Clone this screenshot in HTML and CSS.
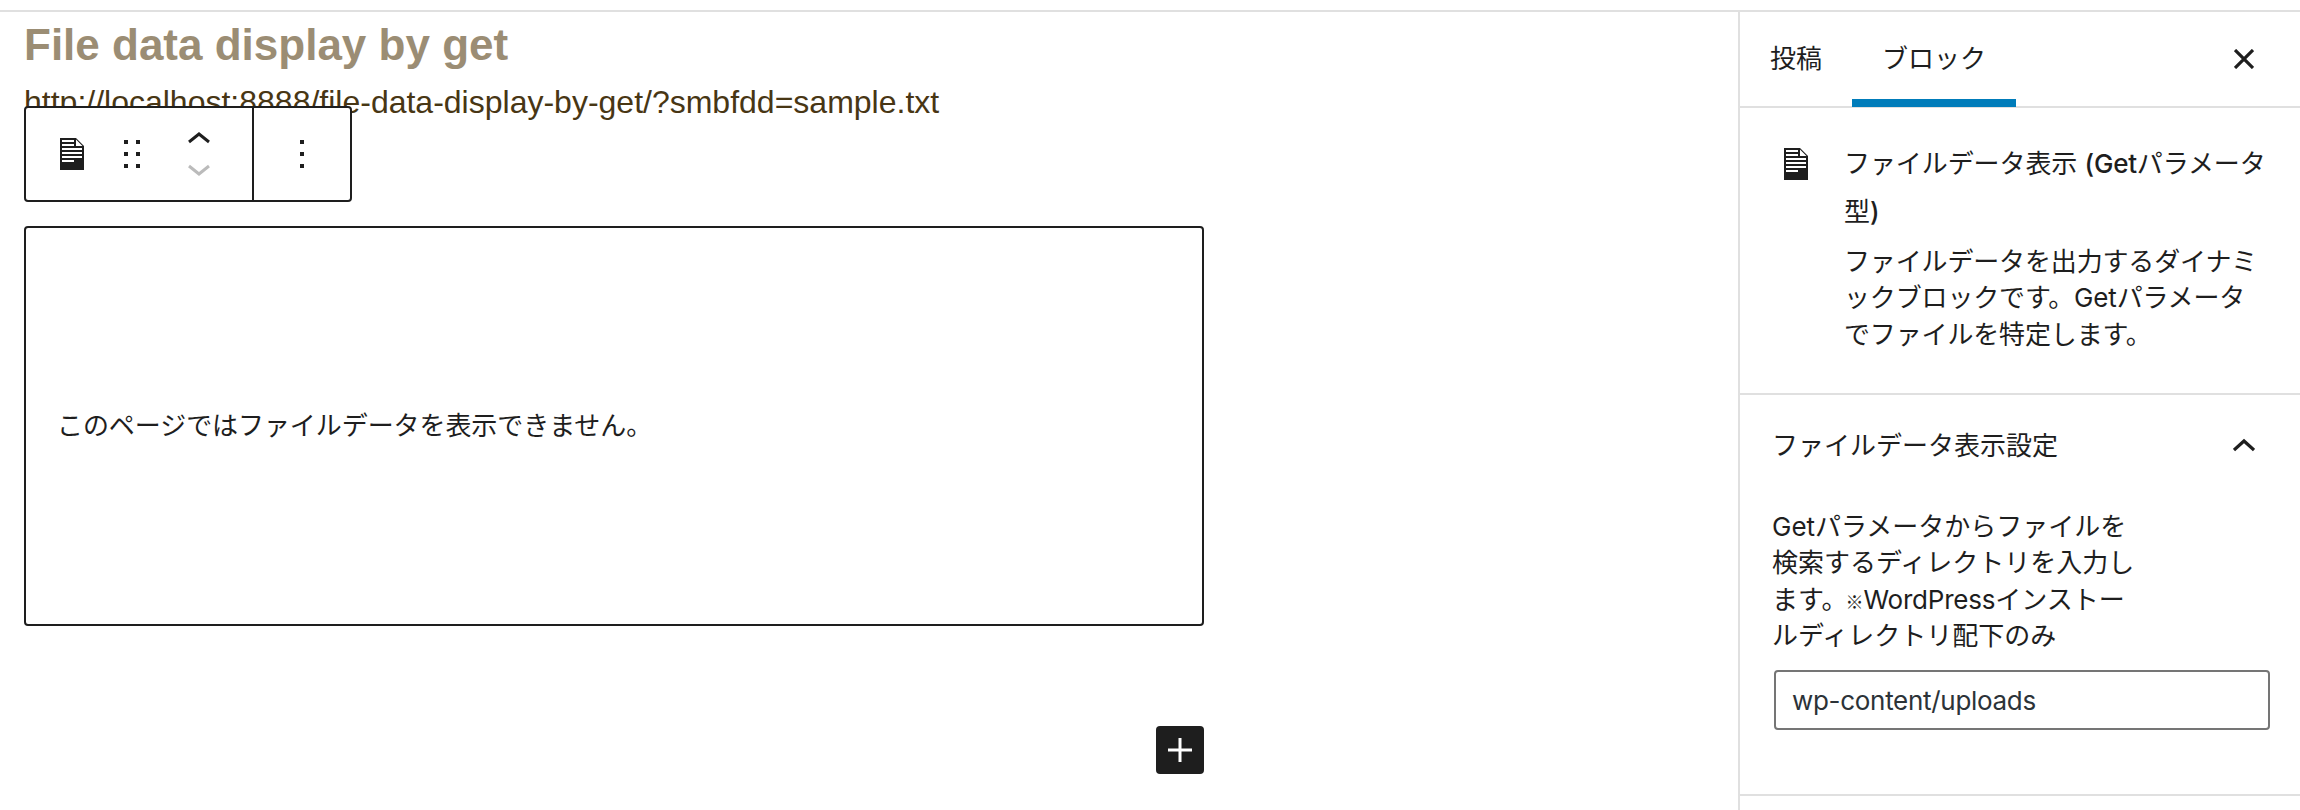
FILE: index.html
```html
<!DOCTYPE html>
<html lang="ja">
<head>
<meta charset="utf-8">
<title>File data display by get</title>
<link rel="stylesheet" href="styles.css">
</head>
<body>
<div class="header-edge"></div>
<div class="editor">
  <main class="canvas">
    <h1 class="title">File data display by get</h1>
    <p class="link-text">http://localhost:8888/file-data-display-by-get/?smbfdd=sample.txt</p>
    <div class="toolbar">
      <div class="tools">
        <svg class="doc" width="24" height="32" viewBox="0 0 24 32"><path fill="#1e1e1e" d="M0 0h16l8 8v24H0z"/><path fill="#fff" d="M2 2h12v2H2zM2 6h12v2H2zM2 10h20v2H2zM2 14h20v2H2zM2 18h20v2H2zM2 22h12v2H2zM16 1.5l6.5 6.5H16z"/></svg>
        <svg class="drag" width="16" height="28" viewBox="0 0 16 28"><path fill="#1e1e1e" d="M0 0h4v4H0zM12 0h4v4h-4zM0 12h4v4H0zM12 12h4v4h-4zM0 24h4v4H0zM12 24h4v4h-4z"/></svg>
        <svg class="movers" width="22" height="44" viewBox="0 0 22 44" fill="none" stroke-width="3"><path stroke="#1e1e1e" d="M1 10L11 2l10 8"/><path stroke="#bbb" d="M1 34l10 8 10-8"/></svg>
      </div>
      <div class="more"><svg width="4" height="28" viewBox="0 0 4 28"><path fill="#1e1e1e" d="M0 0h4v4H0zM0 12h4v4H0zM0 24h4v4H0z"/></svg></div>
    </div>
    <section class="block">このページではファイルデータを表示できません。</section>
    <button class="add" aria-label="ブロックを追加"><svg width="24" height="24" viewBox="0 0 24 24"><path stroke="#fff" stroke-width="3" d="M12 0v24M0 12h24"/></svg></button>
  </main>
  <aside class="sidebar">
    <nav class="tabs">
      <span class="tab">投稿</span>
      <span class="tab active">ブロック</span>
      <svg class="close" width="20" height="20" viewBox="0 0 20 20"><path stroke="#1e1e1e" stroke-width="3.2" d="M1 1l18 18M19 1L1 19"/></svg>
    </nav>
    <section class="card">
      <svg class="card-icon" width="24" height="32" viewBox="0 0 24 32"><path fill="#1e1e1e" d="M0 0h16l8 8v24H0z"/><path fill="#fff" d="M2 2h12v2H2zM2 6h12v2H2zM2 10h20v2H2zM2 14h20v2H2zM2 18h20v2H2zM2 22h12v2H2zM16 1.5l6.5 6.5H16z"/></svg>
      <div class="card-text">
        <h2 class="card-title">ファイルデータ表示 <span class="latin-m">(Get</span>パラメータ<br>型<span class="latin-m">)</span></h2>
        <p class="desc">ファイルデータを出力するダイナミ<br>ックブロックです。Getパラメータ<br>でファイルを特定します。</p>
      </div>
    </section>
    <section class="panel">
      <h2 class="panel-title"><span>ファイルデータ表示設定</span><svg width="22" height="14" viewBox="0 0 22 14"><path fill="none" stroke="#1e1e1e" stroke-width="3.2" d="M1 12l10-9 10 9"/></svg></h2>
      <label class="label" for="dir">Getパラメータからファイルを<br>検索するディレクトリを入力し<br>ます。<span class="mark">※</span><span class="latin">WordPress</span>インストー<br>ルディレクトリ配下のみ</label>
      <input class="field" id="dir" type="text" value="wp-content/uploads">
    </section>
  </aside>
</div>
</body>
</html>
```

FILE: styles.css
```css
* { box-sizing: border-box; }
body { margin: 0; height: 810px; overflow: hidden; background: #fff; color: #1e1e1e; font: 26px/36.4px Inter, "Noto Sans CJK JP", sans-serif; }
h1, h2, p { margin: 0; font-weight: 400; }
svg { display: block; flex: none; }
.header-edge { height: 12px; border-bottom: 2px solid #e0e0e0; }
.editor { display: flex; height: 798px; }
.canvas { flex: 1; padding: 6px 0 0 24px; }
.title { height: 54px; font: 700 44px/54px "Liberation Sans", Arial, sans-serif; color: #9b8d74; white-space: nowrap; }
.link-text { height: 34px; padding-top: 11px; font: 32px/38px "Liberation Sans", Arial, sans-serif; color: #483614; white-space: nowrap; }
.toolbar { position: relative; display: flex; width: 328px; height: 96px; border: 2px solid #1e1e1e; border-radius: 4px; background: #fff; }
.tools { display: flex; align-items: center; width: 228px; padding-left: 34px; border-right: 2px solid #1e1e1e; }
.drag { margin-left: 40px; }
.movers { margin-left: 48px; }
.more { display: flex; flex: 1; align-items: center; justify-content: center; }
.block { display: flex; align-items: center; width: 1180px; height: 400px; margin-top: 24px; padding-left: 31px; border: 2px solid #1e1e1e; border-radius: 4px; letter-spacing: -0.07px; }
.add { display: flex; align-items: center; justify-content: center; width: 48px; height: 48px; margin: 100px 0 0 1132px; padding: 0; border: 0; border-radius: 4px; background: #1e1e1e; }
.sidebar { width: 562px; border-left: 2px solid #e0e0e0; }
.tabs { display: flex; height: 96px; border-bottom: 2px solid #e0e0e0; }
.tab { padding: 29px 30px 0; }
.active { width: 164px; height: 95px; border-bottom: 8px solid #007cba; white-space: nowrap; }
.close { margin: 37px 46px 0 auto; }
.card { display: flex; height: 287px; padding: 32px 0 0 44px; border-bottom: 2px solid #e0e0e0; }
.card-icon { margin: 8px 36px 0 0; }
.card-title { font-size: 26px; line-height: 48px; letter-spacing: -0.08px; white-space: nowrap; }
.latin-m { font-weight: 550; letter-spacing: -0.2px; }
.desc { margin-top: 8px; letter-spacing: -0.15px; white-space: nowrap; }
.panel { height: 401px; padding: 33px 30px 0 32px; border-bottom: 2px solid #e0e0e0; }
.panel-title { display: flex; justify-content: space-between; align-items: center; height: 36px; margin-bottom: 45px; padding-right: 15px; font-size: 26px; }
.panel-title svg { margin-top: -2px; }
.label { display: block; height: 146px; white-space: nowrap; }
.mark { display: inline-block; width: 16px; font: 500 18px/1 "Noto Sans CJK JP", sans-serif; text-indent: -2px; }
.latin { letter-spacing: -0.2px; }
.field { display: block; width: 496px; height: 60px; margin: 15px 0 0 2px; padding: 0 16px; border: 2px solid #757575; border-radius: 4px; background: #fff; color: #2c3338; font: 26px Inter, sans-serif; letter-spacing: -0.3px; }
```
